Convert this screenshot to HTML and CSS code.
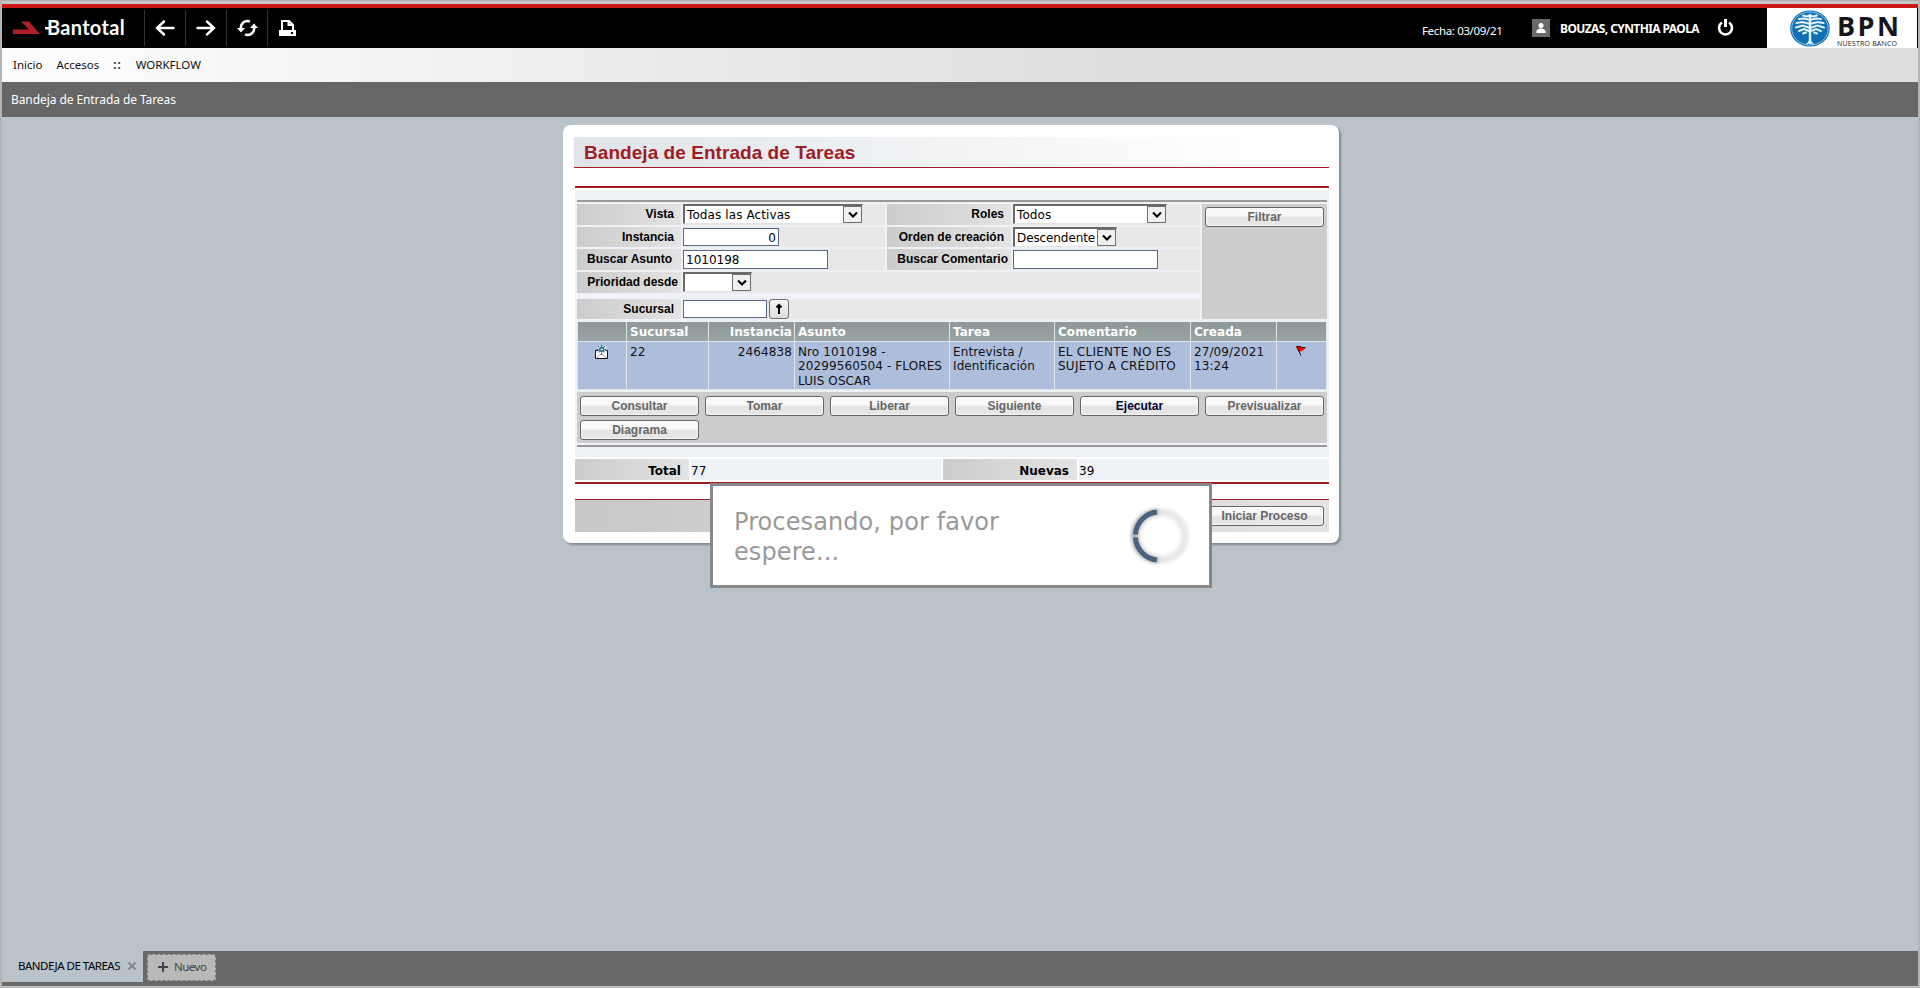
FILE: index.html
```html
<!DOCTYPE html>
<html lang="es">
<head>
<meta charset="utf-8">
<title>Bandeja de Entrada de Tareas</title>
<link rel="stylesheet" href="styles.css">
</head>
<body>
<div class="app">
  <header class="top">
    <div class="brand">
      <svg class="brand-mark" width="27" height="14" viewBox="0 0 27 14"><path fill="#b01f24" d="M0 8.500h16L8 .5h8L27 13H0z"/></svg>
      <svg class="brand-dash" width="6" height="3"><rect width="6" height="2.5" fill="#fff"/></svg>
      <span class="brand-name">Bantotal</span>
    </div>
    <div class="tool"><svg width="20" height="16" viewBox="0 0 20 16" fill="none" stroke="#fff" stroke-width="2.4" stroke-linecap="round"><path d="M18.500 8H2.500M9 1.500L2 8l7 6.500"/></svg></div>
    <div class="tool"><svg width="20" height="16" viewBox="0 0 20 16" fill="none" stroke="#fff" stroke-width="2.4" stroke-linecap="round"><path d="M1.500 8h16M11 1.500l7 6.500-7 6.500"/></svg></div>
    <div class="tool"><svg class="reload" width="21" height="18" viewBox="0 0 21 18"><g fill="none" stroke="#fff" stroke-width="2.6"><path d="M4 10A6.600 6.600 0 0 1 13 2.600M17 8A6.600 6.600 0 0 1 8 15.400"/></g><path fill="#fff" d="M0 9h8l-4 4.500zM13 9h8l-4-4.500z"/></svg></div>
    <div class="tool tool-last"><svg width="17" height="16" viewBox="0 0 17 16"><path fill="none" stroke="#fff" stroke-width="2" d="M3 10V1h7l4 4v5M9.500 1v4H14"/><path fill="#fff" d="M0 10h17v6H0z"/><path d="M12 12h2v2h-2z"/></svg></div>
    <div class="fecha">Fecha: 03/09/21</div>
    <svg class="avatar" width="18" height="18" viewBox="0 0 18 18"><path fill="#696969" d="M0 0h18v18H0z"/><circle cx="9" cy="6.500" r="2.500" fill="#fff"/><path fill="#fff" d="M4.500 14v-2.500l3-2h3l3 2V14z"/></svg>
    <div class="user">BOUZAS, CYNTHIA PAOLA</div>
    <svg class="power" width="17" height="18" viewBox="0 0 17 18" fill="none" stroke="#fff"><path stroke-width="2.6" d="M5 3.500a6.500 6.500 0 1 0 7 0"/><path stroke-width="3" d="M8.500 0v8"/></svg>
    <div class="bank">
      <svg class="bank-logo" width="40" height="37" viewBox="0 0 40 37"><ellipse cx="20" cy="18.500" rx="19.800" ry="18" fill="#0f70b4"/><ellipse cx="20" cy="18.500" rx="18.300" ry="16.600" fill="none" stroke="#a9d2ee" stroke-width=".8"/><g fill="none" stroke="#e4f3fc" stroke-linecap="round"><path stroke-width="2" d="M13 5.500l4 1 3-1 3 1 4-1M9 9l5-.5 6 1.500 6-1.500 5 .5M6.500 13l6-1 7.500 2 7.500-2 6 1M6 17.500l6.500-2 7.500 2.500 7.500-2.500 6.500 2M9 21l5-2 6 2.500 6-2.500 5 2M13 23.500l3-1M27 23.500l-3-1"/><path stroke-width="2.400" d="M20 5v28"/><path stroke-width="1.500" d="M17 34l3-3 3 3"/></g></svg>
      <div class="bank-text"><div class="bpn">BPN</div><div class="slogan">NUESTRO BANCO</div></div>
    </div>
  </header>
  <nav class="menu"><span class="m1">Inicio</span><span class="m2">Accesos</span><span class="m3">::</span><span class="m4">WORKFLOW</span></nav>
  <div class="page-title"><span>Bandeja de Entrada de Tareas</span></div>
  <main class="content">
    <section class="panel">
      <h1 class="heading"><span>Bandeja de Entrada de Tareas</span></h1>
      <div class="body">
        <div class="filters">
          <label class="lab">Vista</label><div class="cell"><div class="sel w179">Todas las Activas<i class="arr"><svg width="10" height="6"><path d="M1 .5l4 4 4-4"/></svg></i></div></div>
          <label class="lab">Roles</label><div class="cell"><div class="sel w154">Todos<i class="arr"><svg width="10" height="6"><path d="M1 .5l4 4 4-4"/></svg></i></div></div>
          <div class="side"><button class="btn"><span>Filtrar</span></button></div>
          <label class="lab">Instancia</label><div class="cell"><div class="inp num">0</div></div>
          <label class="lab">Orden de creación</label><div class="cell"><div class="sel w104">Descendente<i class="arr"><svg width="10" height="6"><path d="M1 .5l4 4 4-4"/></svg></i></div></div>
          <label class="lab wide">Buscar Asunto</label><div class="cell"><div class="inp w145">1010198</div></div>
          <label class="lab tight">Buscar Comentario</label><div class="cell"><div class="inp w145"></div></div>
          <label class="lab tight">Prioridad desde</label><div class="cell span"><div class="sel w69"><i class="arr"><svg width="10" height="6"><path d="M1 .5l4 4 4-4"/></svg></i></div></div>
          <label class="lab last">Sucursal</label><div class="cell span last"><div class="inp w84"></div><button class="up"><svg width="8" height="12" viewBox="0 0 8 12" fill="none" stroke="#000" stroke-width="2"><path d="M4 11V2M1.500 4.500L4 2l2.500 2.500"/></svg></button></div>
        </div>
        <div class="grid">
          <div class="th"></div><div class="th">Sucursal</div><div class="th right">Instancia</div><div class="th">Asunto</div><div class="th">Tarea</div><div class="th">Comentario</div><div class="th">Creada</div><div class="th"></div>
          <div class="td ic"><svg class="mail" width="14" height="14" viewBox="0 0 14 14"><path fill="#fff" stroke="#111" d="M.5 5.500h12v8H.5z"/><path d="M1.500 13l3.500-3.500h3l3.500 3.500" stroke="#999" fill="none"/><path stroke="#fff" stroke-width="3" fill="none" d="M3 1l8 7M11 1L3 8"/><path stroke="#1b6480" stroke-width="1.200" stroke-dasharray="1.500 1" fill="none" d="M6.500 0v9M2 4.500h10M3 1l7 7M10 1L3 8"/><path fill="#fff" stroke="#1b6480" stroke-width="1.300" d="M5 3h3.500v3H5z"/></svg></div>
          <div class="td">22</div><div class="td right">2464838</div><div class="td">Nro 1010198 -<br>20299560504 - FLORES<br>LUIS OSCAR</div><div class="td">Entrevista /<br>Identificación</div><div class="td caps">EL CLIENTE NO ES<br>SUJETO A CRÉDITO</div><div class="td">27/09/2021<br>13:24</div>
          <div class="td ic"><svg class="flag" width="10" height="10" viewBox="0 0 10 10"><path fill="#f00" d="M0 .5l2.500 .5 1.500-.5 2 1.500H9.500L7 4.500 3 6z"/><path fill="none" stroke="#300" stroke-width="1" d="M.5 .5l4.500 9M1 .5h3l2 1h3.500"/></svg></div>
        </div>
        <div class="actions"><button class="btn">Consultar</button><button class="btn">Tomar</button><button class="btn">Liberar</button><button class="btn">Siguiente</button><button class="btn on">Ejecutar</button><button class="btn">Previsualizar</button><button class="btn">Diagrama</button></div>
      </div>
      <div class="totals"><div class="tl">Total</div><div class="tv">77</div><div class="tl">Nuevas</div><div class="tv">39</div></div>
      <div class="bottom"><button class="btn">Iniciar Proceso</button></div>
    </section>
  </main>
  <footer class="tabs"><div class="tab"><span class="tab-name">BANDEJA DE TAREAS</span><svg width="8" height="8" stroke="#84898d" stroke-width="2"><path d="M.5 .5l7 7M7.500 .5l-7 7"/></svg></div><div class="new"><svg width="10" height="10" stroke="#444" stroke-width="2"><path d="M5 0v10M0 5h10"/></svg><span>Nuevo</span></div></footer>
  <div class="modal">
    <p class="msg">Procesando, por favor<br>espere...</p>
    <svg class="spin" width="64" height="64" viewBox="-32 -32 64 64"><defs><filter id="b" filterUnits="userSpaceOnUse" x="-32" y="-32" width="64" height="64"><feGaussianBlur stdDeviation="2"/></filter></defs><g fill="none" stroke-width="5"><circle r="24" stroke="#ccc" stroke-width="6" filter="url(#b)" opacity=".6"/><circle r="24" stroke="#e9e9e9"/><path stroke="#777" opacity=".7" filter="url(#b)" d="M-3 -24A24 24 0 0 0-3 24"/><path stroke="#49637f" d="M-4 -23.900A24 24 0 0 0-25.500 -1.500M-25.500 1.500A24 24 0 0 0-4 23.900"/></g></svg>
  </div>
</div>
</body>
</html>
```
FILE: styles.css
```css
* { box-sizing: border-box; }
body { margin: 0; width: 1920px; height: 988px; overflow: hidden; background: #b5b5b5; }
button { margin: 0; padding: 0; }
.app { position: relative; width: 1920px; height: 988px; border: solid #b5b5b5; border-width: 1px 2px; border-top-color: #adadad; background: #c4c7c9; display: flex; flex-direction: column; padding: 3px 0 1px; }
.top { height: 44px; flex: none; background: #000; border-top: 4px solid #cc1719; display: flex; align-items: center; color: #fff; font-family: "Noto Sans", sans-serif; }
.brand { width: 143px; height: 36px; padding-left: 11px; display: flex; align-items: center; border-right: 1px solid #333; }
.brand-dash { margin: 0 -4px 0 5px; }
.brand-name { font: bold 20px/22px "Lato", sans-serif; letter-spacing: .3px; margin-top: -3px; }
.tool { width: 41px; height: 36px; border-right: 1px solid #333; display: flex; align-items: center; justify-content: center; }
.reload { margin-left: 1px; }
.tool-last { width: 38px; border: 0; }
.fecha { margin: 5px 0 0 1116px; font-size: 11.5px; letter-spacing: -.35px; width: 110px; white-space: nowrap; }
.user { margin-left: 10px; width: 157px; font-size: 12px; letter-spacing: -.6px; font-weight: bold; white-space: nowrap; }
.bank { margin-left: auto; width: 150px; height: 40px; background: #fff; display: flex; align-items: flex-start; padding: 2px 0 0 23px; margin-right: 1px; }
.bank-text { color: #16161a; padding-left: 7px; }
.bpn { font: bold 27px/29px "Open Sans", sans-serif; letter-spacing: 2.4px; padding-top: 1px; }
.slogan { font: 7px/8px "Open Sans", sans-serif; letter-spacing: .2px; white-space: nowrap; }
.menu { height: 34px; flex: none; display: flex; align-items: center; background: linear-gradient(90deg, #fcfcfc 4%, #ddd 60%); font: 11.5px "Noto Sans", sans-serif; color: #111; padding: 0 0 2px 11px; }
.m2 { margin-left: 14px; }
.m3 { margin-left: 14px; color: #135; letter-spacing: 1px; font-weight: bold; }
.m4 { margin-left: 14px; }
.page-title { height: 35px; flex: none; background: #666; color: #fff; font: 12px/35px "Noto Sans", sans-serif; letter-spacing: -.08px; padding-left: 9px; }
.content { flex: 1; background: #bac2ca; padding: 8px 0 0 561px; }
.panel { width: 776px; height: 418px; background: #fff; border-radius: 8px; padding: 12px 10px 0 11px; box-shadow: 2px 2px 2px #7e8b95; }
.heading { margin: 0; height: 31px; border-bottom: 1px solid #a01c24; background: linear-gradient(90deg, #e0e4e8, #fff 90%); color: #a01c24; font: bold 19px/31px "Liberation Sans", Arial, sans-serif; letter-spacing: .05px; padding-left: 10px; }
.body { margin: 18px 0 0 1px; border-top: 2px solid #a01c24; height: 271px; padding: 12px 2px 0; background: linear-gradient(#fff 2px, #eef2f6 2px); }
.filters { border-top: 2px solid #999; padding-top: 2px; display: grid; grid-template-columns: 104px 202px 124px 187px 125px; grid-template-rows: 21px 20px 21px 21px 20px; column-gap: 2px; row-gap: 2px; height: 122px; font: bold 12px "Liberation Sans", Arial, sans-serif; }
.lab { background: linear-gradient(90deg, #ccc, #e3e3e3); text-align: right; padding-right: 7px; line-height: 20px; white-space: nowrap; }
.lab.wide { padding-right: 9px; }
.lab.tight { padding-right: 3px; }
.cell { background: #e8e8e8; display: flex; align-items: center; gap: 2px; }
.cell.span { grid-column: 2 / 5; }
.last { margin-top: 4px; margin-bottom: -4px; }
.side { grid-column: 5; grid-row: 1 / 6; background: #cdcdcd; height: 115px; padding: 3px; }
.inp { height: 19px; border: 1px solid #58678a; background: #fff; font: 12px/19px "DejaVu Sans", Verdana, sans-serif; padding: 0 2px; }
.num { width: 96px; height: 18px; text-align: right; }
.w145 { width: 145px; }
.w84 { width: 84px; height: 18px; }
.sel { position: relative; height: 20px; align-self: flex-start; border: solid #696969; border-width: 2px 0 0 2px; background: #fff; font: 12px/18px "DejaVu Sans", Verdana, sans-serif; padding-left: 2px; white-space: nowrap; border-right: 1px solid #e3e3e3; border-bottom: 1px solid #e3e3e3; letter-spacing: .1px; }
.w179 { width: 180px; }
.w154 { width: 154px; }
.w104 { width: 104px; letter-spacing: -.1px; }
.w69 { width: 69px; }
.arr { position: absolute; right: 0; top: 0; bottom: 0; width: 19px; border: 1px solid #707070; background: #f0f0f0; display: flex; align-items: center; justify-content: center; }
.arr path { fill: none; stroke: #000; stroke-width: 2; }
.up { width: 20px; height: 20px; border: 1px solid #707070; border-radius: 3px; background: linear-gradient(#f8f8f8, #ddd); display: flex; align-items: center; justify-content: center; }
.btn { display: block; width: 119px; height: 20px; border: 1px solid #666; border-radius: 3px; background: linear-gradient(#f8f8f8 45%, #e4e4e4 50%, #e6e6e6); color: #666; font: bold 12px/18px "Liberation Sans", Arial, sans-serif; box-shadow: inset 0 0 0 1px #ffffff90; }
.btn.on { color: #000033; }
.grid { display: grid; grid-template-columns: 49px 82px 86px 155px 105px 136px 86px 50px; grid-template-rows: 20px 48px; border-left: 1px solid #e3e6e9; font: 12px/14.4px "DejaVu Sans", Verdana, sans-serif; }
.th { background: linear-gradient(#8d9899, #9ba4a4); color: #fff; font-weight: bold; line-height: 20px; }
.th, .td { padding: 0 2px 0 3px; border-right: 1px solid #e3e6e9; border-bottom: 1px solid #e3e6e9; white-space: nowrap; }
.th { height: 20px; letter-spacing: .05px; }
.td { background: #adbedc; padding-top: 3px; color: #111; letter-spacing: .1px; }
.caps { letter-spacing: .25px; }
.right { text-align: right; padding-right: 2px; }
.ic { text-align: center; }
.mail { margin-right: 2px; }
.flag { margin-right: 3px; }
.actions { margin-top: 2px; height: 51px; background: #cdcdcd; padding: 4px 3px; display: flex; flex-wrap: wrap; gap: 4px 6px; align-content: flex-start; box-shadow: 0 2px #eef2f6, 0 4px #999; }
.totals { margin: 0 0 0 1px; padding-top: 2px; height: 27px; border-bottom: 2px solid #a01c24; display: grid; grid-template-columns: 114px 250px 134px 250px; column-gap: 2px; grid-template-rows: 21px; font: 12px/24px "DejaVu Sans", Verdana, sans-serif; }
.tl { font-weight: bold; text-align: right; padding-right: 8px; height: 21px; background: linear-gradient(90deg, #ccc, #e3e3e3); }
.tv { background: #eef2f6; height: 21px; }
.bottom { margin: 15px 0 0 1px; height: 33px; border-top: 1px solid #a01c24; background: linear-gradient(90deg, #c8c8c8, #e3e3e3); padding: 6px 5px; display: flex; justify-content: flex-end; }
.tabs { flex: none; height: 35px; background: #696969; display: flex; font: 11.5px "Noto Sans", sans-serif; }
.tab { width: 141px; height: 31px; background: #bac2ca; display: flex; align-items: center; padding: 0 0 2px 16px; gap: 8px; white-space: nowrap; color: #000; }
.tab-name { letter-spacing: -.5px; }
.new { margin: 3px 0 0 4px; width: 69px; height: 27px; background: #b9b9b9; border: 1px dashed #777; border-radius: 3px; display: flex; align-items: center; padding: 0 0 2px 10px; gap: 6px; color: #444; letter-spacing: -.5px; }
.modal { position: absolute; left: 708px; top: 482px; width: 502px; height: 105px; border: 3px solid #888; background: #fff; display: flex; justify-content: space-between; padding: 21px 16px 0 21px; }
.msg { margin: 0; color: #999; font: 24px/30px "DejaVu Sans", Verdana, sans-serif; letter-spacing: .1px; white-space: nowrap; }
.spin { margin-top: -3px; }
```
